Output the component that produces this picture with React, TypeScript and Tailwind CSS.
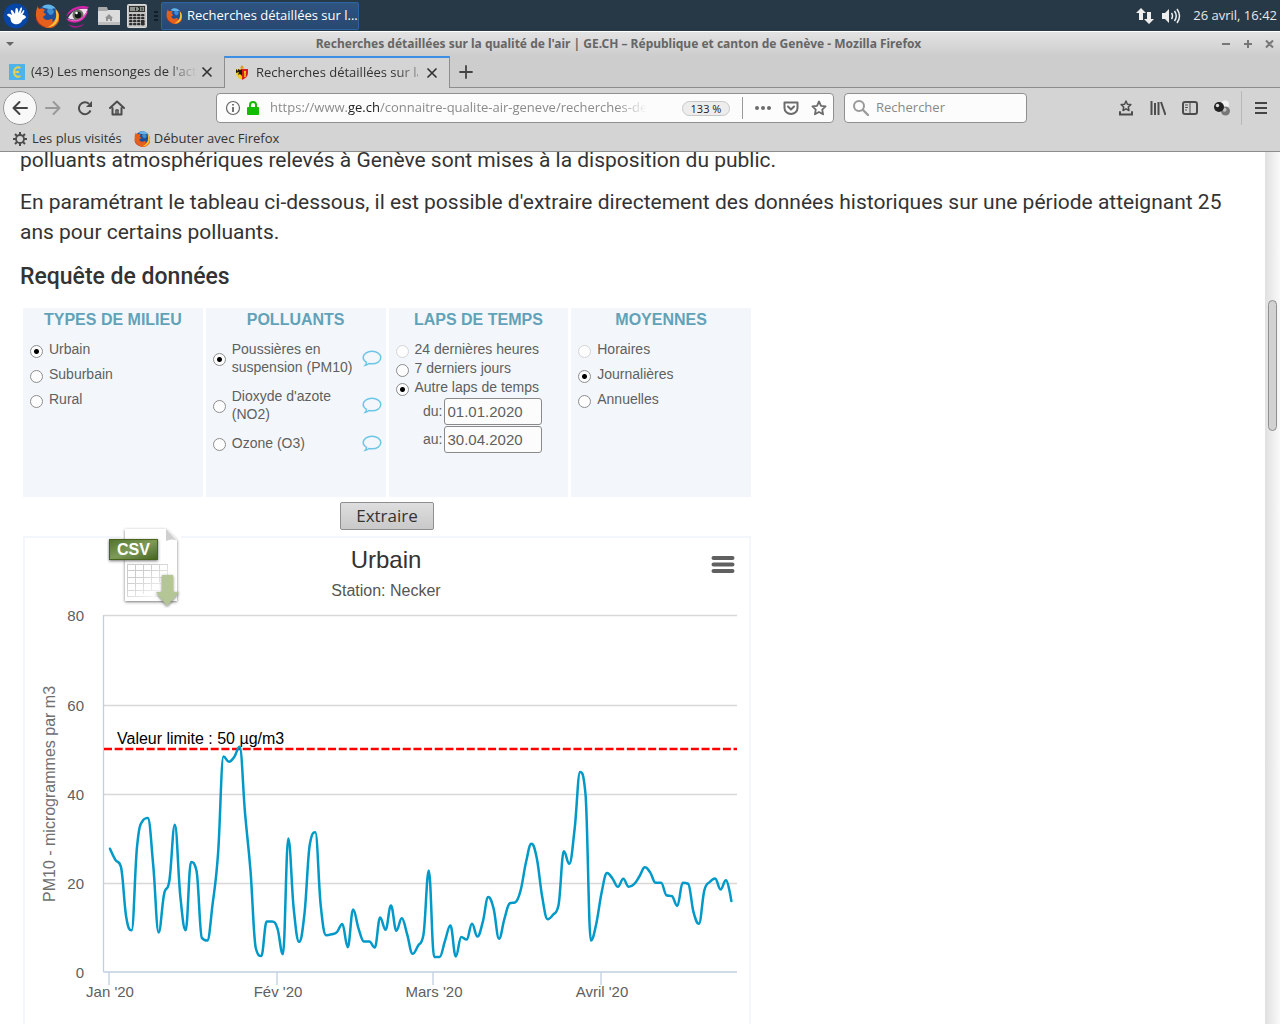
import type { ReactNode } from 'react';

const pm10 = [
  27.8, 25.3, 23.8, 12.4, 9.4, 28.2, 34, 34.7, 24.1, 8.9, 17.5, 20.7, 33.2, 17.3, 9.4, 24.8, 22.9, 7.7, 7.1, 15.4,
  26.7, 48.6, 47.4, 48.5, 50.8, 35.7, 22.9, 5.3, 3.6, 11.4, 11.4, 9.8, 4, 30.1, 14.3, 6.8, 13.2, 28.9, 31.5, 15,
  8.3, 8.5, 9, 10.8, 5.6, 14.1, 9.8, 6.9, 6.9, 5.5, 12.3, 9.5, 15, 9.3, 12.1, 8.5, 4.1, 5.9, 8.3, 22.9,
  3.4, 3.4, 7, 10.5, 3.5, 7.9, 7.3, 10.9, 8, 11.3, 16.9, 14.3, 7.5, 12, 15.5, 15.7, 18.4, 24.8, 28.9, 25.6,
  16.9, 11.9, 12.9, 15, 27.2, 24.4, 32.3, 45.1, 40.2, 7.1, 10.9, 18, 22.3, 21.1, 19.2, 21, 19.2, 19.8, 21.6, 23.6,
  22.4, 20.1, 20.1, 17.3, 17.1, 14.9, 20.1, 19.9, 13.5, 10.9, 18.4, 20.3, 21.1, 18.6, 20.7, 16,
];

const months = [
  { label: "Jan '20", x: 84 },
  { label: "Fév '20", x: 252 },
  { label: "Mars '20", x: 408 },
  { label: "Avril '20", x: 576 },
];

const gridLines = [
  { value: 80, y: 77 },
  { value: 60, y: 167 },
  { value: 40, y: 256 },
  { value: 20, y: 345 },
  { value: 0, y: 434 },
];

// Smoothed line: control points never overshoot the neighbouring values
function splinePath(values: number[]) {
  const pts = values.map((v, i) => ({ x: 85 + i * 5.403, y: 434 - v * 4.435 }));
  let d = `M ${pts[0].x} ${pts[0].y}`;
  let out = pts[0];
  for (let i = 1; i < pts.length; i++) {
    const prev = pts[i - 1];
    const p = pts[i];
    const next = pts[i + 1];
    let inn = p;
    let nextOut = p;
    if (next) {
      const lx = (1.5 * p.x + prev.x) / 2.5;
      let ly = (1.5 * p.y + prev.y) / 2.5;
      const rx = (1.5 * p.x + next.x) / 2.5;
      let ry = (1.5 * p.y + next.y) / 2.5;
      const c = ((ry - ly) * (rx - p.x)) / (rx - lx) + p.y - ry;
      ly += c;
      ry += c;
      if (ly > prev.y && ly > p.y) {
        ly = Math.max(prev.y, p.y);
        ry = 2 * p.y - ly;
      } else if (ly < prev.y && ly < p.y) {
        ly = Math.min(prev.y, p.y);
        ry = 2 * p.y - ly;
      }
      if (ry > next.y && ry > p.y) {
        ry = Math.max(next.y, p.y);
        ly = 2 * p.y - ry;
      } else if (ry < next.y && ry < p.y) {
        ry = Math.min(next.y, p.y);
        ly = 2 * p.y - ry;
      }
      inn = { x: lx, y: ly };
      nextOut = { x: rx, y: ry };
    }
    d += ` C ${out.x} ${out.y} ${inn.x} ${inn.y} ${p.x} ${p.y}`;
    out = nextOut;
  }
  return d;
}

const FirefoxIcon = ({ className }: { className?: string }) => (
  <svg viewBox="0 0 24 24" className={className} aria-hidden="true">
    <circle cx="12.5" cy="10.5" r="10" fill="#1d4f9a" />
    <path d="M7 3c4-4 11-3 14 2-3-1-4 0-5 1-3-2-6-1-9-3z" fill="#62b5e8" />
    <path d="M13 5c3-1 6 0 6 3-1 3-4 4-5 2-1-1-3-3-1-5z" fill="#3c8fd2" />
    <path
      d="M1 9C1 6 2 4 3 2c0 2 1 3 2 3 2-1 4 0 5 1-1 1-2 2-1 3l2 1c-1 2-3 2-3 3 1 3 5 4 8 2 2 0 2 1 1 3 3-1 5-4 5-8 0-2-1-4-1-5 3 3 4 7 3 12-2 5-7 8-12 7C5 22 0 17 1 9z"
      fill="#e4601c"
    />
    <path d="M20.500 5c3 3 4 7 2.500 11-2 5-6 7-10 7 6-3 9-8 8-14z" fill="#fcc237" />
    <path d="M1 12c1 6 5 10 11 11C5 23 0 18 1 12z" fill="#b93016" />
  </svg>
);

const EyeIcon = () => (
  <svg viewBox="0 0 26 24" className="h-6 w-[26px]" aria-hidden="true">
    <path d="M3 14C7 6 15 4 23 5c-3 9-11 13-20 9z" fill="#f4dcec" />
    <circle cx="13" cy="11" r="5.500" fill="#66715f" />
    <circle cx="13" cy="11" r="3.300" fill="#12181a" />
    <circle cx="11.500" cy="9" r="1.300" fill="#fff" />
    <path d="M1 13C4 4 14 0 24 3c-1 1-2 2-3 2C13 3 6 7 1 13z" fill="#d522aa" />
    <path d="M1 14c8 5 18 2 22-10 0 11-10 18-20 13z" fill="#d522aa" />
    <path d="M3 20c5 3 12 3 17-1-4 6-14 6-17 1z" fill="#b21791" />
    <path d="M3 15c8 4 15 1 19-7" fill="none" stroke="#f27bd3" strokeWidth=".8" />
  </svg>
);

const FolderIcon = () => (
  <svg viewBox="0 0 24 22" className="h-[22px] w-6" aria-hidden="true">
    <path d="M1 3q0-1 1-1h8l1 3h11q1 0 1 1v4H1z" fill="#a9a9a9" />
    <path d="M1 6h9l1-1h11q1 0 1 1v13q0 1-1 1H2q-1 0-1-1z" fill="#dcdcdc" />
    <path d="M1 17h22v2q0 1-1 1H2q-1 0-1-1z" fill="#bdbdbd" />
    <path d="M12 9l4 4h-1v3h-2v-2h-2v2H9v-3H8z" fill="#929292" />
  </svg>
);

const CalculatorIcon = () => (
  <svg viewBox="0 0 20 24" className="h-6 w-5" aria-hidden="true">
    <rect x=".5" y=".5" width="19" height="23" rx="1" fill="#c4c4c4" stroke="#d8d8d8" />
    <rect x="2" y="2" width="16" height="6" fill="#333" />
    <rect x="3" y="3" width="14" height="4" fill="#8c948c" />
    <path d="M8.500 3.500v3M11 3.500h1.500v3H11M15 3.500v3" stroke="#222" fill="none" />
    {[10, 13, 16, 19].map((y) =>
      [2, 6, 10, 14].map((x) => <rect key={`${x}-${y}`} x={x} y={y} width="3.500" height="2.300" rx="1" fill="#2d2d2d" />),
    )}
    <rect x="14" y="16" width="3.500" height="5.300" rx="1" fill="#2d2d2d" />
  </svg>
);

const GenevaCrest = () => (
  <svg viewBox="0 0 14 16" className="h-4 w-3.5" aria-hidden="true">
    <path d="M1 4h6v11C3 13 1 11 1 8z" fill="#f3cf16" />
    <path d="M7 4h6v4c0 3-2 5-6 7z" fill="#d81d1d" />
    <path d="M1 4l2 2V4l2 1 2-1v7l-2-2-2 1 1-3-3 1z" fill="#241a08" />
    <path d="M10 6v6M9 7h2" stroke="#f3cf16" strokeWidth="1.500" />
    <path d="M5 3l2-3 2 3-2 1z" fill="#d8a018" />
  </svg>
);

const CsvIcon = () => (
  <svg viewBox="0 0 74 82" className="h-[82px] w-[74px]" aria-hidden="true">
    <defs>
      <linearGradient id="csv-band" x1="0" x2="1" y1="0" y2="1">
        <stop offset="0" stopColor="#54742e" />
        <stop offset=".5" stopColor="#7d9a58" />
        <stop offset="1" stopColor="#486623" />
      </linearGradient>
      <filter id="csv-shadow" x="-20%" y="-20%" width="140%" height="140%">
        <feDropShadow dx="0" dy="1" stdDeviation="1.500" floodColor="#444" floodOpacity=".75" />
      </filter>
      <linearGradient id="csv-grid" x1="0" x2="1" y1="0" y2="1">
        <stop offset=".3" stopColor="#ccc" />
        <stop offset="1" stopColor="#fff" />
      </linearGradient>
    </defs>
    <rect x="14" y="0" width="60" height="76" fill="#fff" />
    <path d="M18 3h41l11 11v61H18z" fill="#fff" filter="url(#csv-shadow)" />
    <path d="M59 3l11 12c-3-2-7-2-11 0z" fill="#cfcfcf" />
    <g fill="none" stroke="url(#csv-grid)" strokeWidth="1">
      <rect x="20.500" y="38.500" width="40" height="32" />
      <path d="M20 44.500h41M20 51.500h38M20 57.500h34M20 64.500h32M28.500 38v32M36.500 38v30M44.500 38v26M52.500 38v18" />
    </g>
    <g filter="url(#csv-shadow)">
      <rect x="2" y="13" width="49" height="21" fill="#46641f" />
      <rect x="3" y="14" width="47" height="19" fill="url(#csv-band)" />
    </g>
    <text x="26.500" y="29" textAnchor="middle" fontSize="16" fontWeight="700" fill="#fff" fontFamily="Liberation Sans, sans-serif">
      CSV
    </text>
    <path d="M55 49h11v17h6L60 80 49 66h6z" fill="#b4c695" filter="url(#csv-shadow)" />
  </svg>
);

const Bubble = () => (
  <svg viewBox="0 0 20 17" className="h-[17px] w-5 shrink-0" fill="none" stroke="#6dc6e6" strokeWidth="1.500" aria-hidden="true">
    <path d="M4.500 12.300C2.500 11.300 1.200 9.600 1.200 7.600c0-3.500 3.900-6.300 8.800-6.300s8.800 2.800 8.800 6.300-3.900 6.200-8.800 6.200c-1 0-2-.1-3-.3-1.100.9-2.300 1.500-3.700 1.800.7-.8 1.100-1.900 1.200-3z" />
  </svg>
);

const ToolIcon = ({ children, className = '' }: { children: ReactNode; className?: string }) => (
  <svg viewBox="0 0 16 16" className={`size-4 ${className}`} fill="none" stroke="currentColor" strokeWidth="2" strokeLinecap="round" strokeLinejoin="round" aria-hidden="true">
    {children}
  </svg>
);

const IconButton = ({ label, children }: { label: string; children: ReactNode }) => (
  <button type="button" aria-label={label} className="flex size-8 items-center justify-center text-[#4c4c4c]">
    {children}
  </button>
);

const starPath = 'M8 1.500l2 4.300 4.600.6-3.400 3.200.9 4.700L8 12l-4.100 2.300.9-4.700L1.400 6.400 6 5.800z';

const CloseIcon = () => (
  <ToolIcon>
    <path d="M4 4l8 8M12 4l-8 8" strokeWidth="1.700" />
  </ToolIcon>
);

function Taskbar() {
  return (
    <header className="flex h-[31px] shrink-0 items-center bg-[#273947] pl-[3px] text-[#e8e8e8]">
      <div className="flex items-center gap-[6px]">
        <svg viewBox="0 0 26 26" className="size-[26px]" aria-hidden="true">
          <circle cx="13" cy="13" r="12.500" fill="#0646a8" />
          <path
            d="M4 12c1-2 3-1 5 0L8 9c-1-2 1-3 2-1l2 3 .5-5c.5-2 2.500-1 2.500 1l.5 3 2-5c1-1 2 0 1.500 1l-1.500 5 3-4c1 0 1 1 .5 2l-1.500 3c3 0 4 2 3 3-1 1-2 1-3 2-2 4-5 5-8 4-4-1-4-5-4-6-1-1-3-2-3.500-3z"
            fill="#fff"
          />
        </svg>
        <FirefoxIcon className="size-6" />
        <EyeIcon />
        <FolderIcon />
        <CalculatorIcon />
      </div>
      <div className="mr-[3px] ml-[7px] flex flex-col gap-[2px]">
        <i className="h-[2px] w-1 bg-[#131f28]" />
        <i className="h-[2px] w-1 bg-[#131f28]" />
        <i className="h-[2px] w-1 bg-[#131f28]" />
      </div>
      <button type="button" className="flex h-7 w-[198px] items-center gap-[5px] rounded-xs border border-[#2b64a3] bg-linear-to-b from-[#2f5480] to-[#27476f] px-1 text-[13px] whitespace-nowrap text-white">
        <FirefoxIcon className="size-4 shrink-0" />
        Recherches détaillées sur l...
      </button>
      <div className="ml-auto flex items-center pr-[3px]">
        <svg viewBox="0 0 18 18" className="mr-[7px] size-[18px]" fill="#eee" aria-hidden="true">
          <path d="M5 1l5 5H7v7H3V6H0zM13 17l-5-5h3V5h4v7h3z" />
        </svg>
        <svg viewBox="0 0 20 18" className="mr-3 h-[18px] w-5" fill="#eee" aria-hidden="true">
          <path d="M1 6h3l4-4v14l-4-4H1z" />
          <path d="M10.500 6q2 3 0 6M13.500 4q3.500 5 0 10M16 2q5 7 0 14" fill="none" stroke="#eee" strokeWidth="1.500" />
        </svg>
        <span className="text-[13px]">26 avril, 16:42</span>
      </div>
    </header>
  );
}

function TabStrip() {
  return (
    <div className="flex h-8 shrink-0 bg-[#cdcdcd] text-[13px] text-[#333]">
      <div className="flex w-56 items-center border-b border-[#8d8d8d] pl-[9px]">
        <svg viewBox="0 0 16 16" className="size-4 shrink-0" aria-hidden="true">
          <rect width="16" height="16" fill="#4fb2e8" />
          <path d="M11.500 4C8 2 5 4.500 5 8s3 6 6.500 4M4 8h6" fill="none" stroke="#e3cf50" strokeWidth="2" />
        </svg>
        <span className="ml-[6px] w-[166px] whitespace-nowrap [mask-image:linear-gradient(to_right,#000_82%,transparent)]">
          (43) Les mensonges de l'acti
        </span>
        <button type="button" aria-label="Fermer l'onglet" className="ml-[2px]">
          <CloseIcon />
        </button>
      </div>
      <div className="flex w-[226px] items-center border-x border-t-2 border-x-[#8d8d8d] border-t-[#3c8fe4] bg-[#d4d4d4] pl-[10px]">
        <GenevaCrest />
        <span className="ml-[7px] w-[162px] whitespace-nowrap [mask-image:linear-gradient(to_right,#000_86%,transparent_110%)]">
          Recherches détaillées sur la
        </span>
        <button type="button" aria-label="Fermer l'onglet" className="ml-[6px]">
          <CloseIcon />
        </button>
      </div>
      <div className="flex flex-1 items-center border-b border-[#8d8d8d] pl-2">
        <button type="button" aria-label="Nouvel onglet" className="text-[#444]">
          <ToolIcon>
            <path d="M8 2v12M2 8h12" strokeWidth="1.800" />
          </ToolIcon>
        </button>
      </div>
    </div>
  );
}

function NavBar() {
  return (
    <nav className="flex h-10 shrink-0 items-center bg-[#d4d4d4] pl-[3px] text-[13px]">
      <button type="button" aria-label="Reculer" className="flex size-[34px] items-center justify-center rounded-full border border-[#999] bg-[#f8f8f8] text-[#444]">
        <ToolIcon>
          <path d="M15 8H1.500M7.500 2l-6 6 6 6" />
        </ToolIcon>
      </button>
      <div className="flex">
        <button type="button" aria-label="Avancer" className="flex size-8 items-center justify-center text-[#999]">
          <ToolIcon>
            <path d="M1 8h13.500M8.500 2l6 6-6 6" />
          </ToolIcon>
        </button>
        <IconButton label="Actualiser">
          <ToolIcon>
            <path d="M13.500 10.500A6 6 0 1 1 12 3.800" strokeLinecap="butt" />
            <path d="M15 1v6H9z" fill="currentColor" stroke="none" />
          </ToolIcon>
        </IconButton>
        <IconButton label="Accueil">
          <ToolIcon>
            <path d="M1 8l7-6.500L15 8M3.500 8v6.500h9V8" />
            <path d="M7 14v-4h2v4" strokeWidth="1.500" />
          </ToolIcon>
        </IconButton>
      </div>
      <div className="ml-[83px] flex h-[30px] flex-1 items-center rounded-[4px] border border-[#8f8f8f] bg-[#fcfcfc] px-2">
        <svg viewBox="0 0 16 16" className="size-4 shrink-0" fill="none" stroke="#666" aria-hidden="true">
          <circle cx="8" cy="8" r="6.500" strokeWidth="1.200" />
          <path d="M8 7v5M8 4v1.500" strokeWidth="1.800" />
        </svg>
        <svg viewBox="0 0 14 16" className="ml-[5px] h-4 w-3.5 shrink-0" aria-hidden="true">
          <path d="M4 8V5a3 3 0 0 1 6 0v3" fill="none" stroke="#12bc00" strokeWidth="2" />
          <rect x="1" y="7" width="12" height="8" rx="1" fill="#12bc00" />
        </svg>
        <span className="ml-[10px] w-0 flex-1 whitespace-nowrap text-[#8b8b8b] [mask-image:linear-gradient(to_right,#000_92%,transparent)]">
          https://www.<span className="text-[#222]">ge.ch</span>/connaitre-qualite-air-geneve/recherches-det
        </span>
        <button type="button" className="ml-[35px] h-[15px] w-12 rounded-full border border-[#c8c8c8] bg-[#ededed] text-[11px] leading-[13px] text-[#222]">
          133 %
        </button>
        <span className="ml-3 h-[22px] w-px bg-[#999]" />
        <button type="button" aria-label="Actions" className="ml-3 text-[#6b6b6b]">
          <ToolIcon>
            <path d="M2 8h.01M8 8h.01M14 8h.01" strokeWidth="4" />
          </ToolIcon>
        </button>
        <button type="button" aria-label="Pocket" className="ml-3 text-[#6b6b6b]">
          <ToolIcon>
            <path d="M1.500 2.500h13V8a6.500 6 0 0 1-13 0z" />
            <path d="M5 6.500l3 3 3-3" />
          </ToolIcon>
        </button>
        <button type="button" aria-label="Marquer cette page" className="ml-3 -mr-2 pr-1.5 text-[#6b6b6b]">
          <ToolIcon>
            <path d={starPath} strokeWidth="1.800" />
          </ToolIcon>
        </button>
      </div>
      <div className="ml-[10px] flex h-[30px] w-[183px] items-center rounded-[4px] border border-[#8f8f8f] bg-[#fcfcfc] pl-2 text-[#999]">
        <ToolIcon className="shrink-0">
          <circle cx="6" cy="6" r="5" />
          <path d="M10 10l5 5" strokeWidth="2.300" />
        </ToolIcon>
        <input aria-label="Rechercher" placeholder="Rechercher" className="ml-[7px] w-full bg-transparent text-[#222] outline-none placeholder:text-[#888]" />
      </div>
      <div className="ml-[83px] flex">
        <IconButton label="Marque-pages">
          <ToolIcon>
            <path d="M8 1l1.400 3.200 3.400.4-2.500 2.400.7 3.500L8 8.800 5 10.500 5.700 7 3.200 4.600l3.400-.4z" strokeWidth="1.500" />
            <path d="M2 12v2.500h12V12" strokeLinejoin="miter" />
          </ToolIcon>
        </IconButton>
        <IconButton label="Bibliothèque">
          <ToolIcon>
            <path d="M1.500 1v14M5 3v12M8.500 2v13M11 2l4.500 13" strokeLinecap="butt" />
          </ToolIcon>
        </IconButton>
        <IconButton label="Panneau latéral">
          <ToolIcon>
            <rect x="1" y="2" width="14" height="12" rx="2" />
            <path d="M8 2v12M3.500 5h2M3.500 7.500h2M3.500 10h1" strokeWidth="1" />
          </ToolIcon>
        </IconButton>
        <IconButton label="Extension">
          <svg viewBox="0 0 16 16" className="size-4" aria-hidden="true">
            <circle cx="11" cy="4.500" r="4" fill="#f2f2f2" />
            <circle cx="11.500" cy="11" r="4.500" fill="#777" />
            <circle cx="10.500" cy="9.800" r="2" fill="#c5c5c5" />
            <circle cx="5" cy="7" r="5" fill="#222" />
            <circle cx="3.500" cy="5.500" r="1.700" fill="#ddd" />
          </svg>
        </IconButton>
      </div>
      <span className="ml-[3px] h-[34px] w-px bg-[#b8b8b8]" />
      <button type="button" aria-label="Ouvrir le menu" className="mr-[11px] ml-[11px] text-[#444]">
        <ToolIcon>
          <path d="M2 3h12M2 8h12M2 13h12" strokeLinecap="butt" />
        </ToolIcon>
      </button>
    </nav>
  );
}

function Radio({ name, label, checked, disabled, className = '' }: { name: string; label: string; checked?: boolean; disabled?: boolean; className?: string }) {
  return (
    <label className={`flex items-center gap-[6px] ${className}`}>
      <input
        type="radio"
        name={name}
        defaultChecked={checked}
        disabled={disabled}
        className="mt-[3px] size-[13px] shrink-0 appearance-none rounded-full border border-[#8c8c8c] bg-[#fdfdfd] checked:bg-[radial-gradient(circle,#000_0_2px,#fdfdfd_3px)] disabled:border-[#d4d4d4]"
      />
      {label}
    </label>
  );
}

const Panel = ({ title, children }: { title: string; children: ReactNode }) => (
  <fieldset className="h-[189px] min-w-0 bg-[#f3f7fb]">
    <legend className="float-left mb-[8px] w-full text-center text-[16px] leading-[23px] font-bold text-[#62a2b9]">{title}</legend>
    <div className="clear-both">{children}</div>
  </fieldset>
);

function DateField({ label, value }: { label: string; value: string }) {
  return (
    <label className="flex items-center justify-end gap-px">
      {label}
      <input defaultValue={value} className="h-[27px] w-[98px] rounded-[3px] border border-[#8a8a8a] bg-[#fcfcfc] px-[3px] text-[15px]" />
    </label>
  );
}

function QueryForm() {
  return (
    <form className="font-['Liberation_Sans',Arial,sans-serif] text-[14px] text-[#5f5f5f]" onSubmit={(e) => e.preventDefault()}>
      <div className="grid grid-cols-4 gap-[3px]">
        <Panel title="TYPES DE MILIEU">
          <div className="flex flex-col gap-[6px] pt-px pl-[7px] leading-[19px]">
            <Radio name="milieu" label="Urbain" checked />
            <Radio name="milieu" label="Suburbain" />
            <Radio name="milieu" label="Rural" />
          </div>
        </Panel>
        <Panel title="POLLUANTS">
          <div className="flex flex-col gap-[11px] pt-px pr-1 pl-[7px] leading-[18px]">
            {['Poussières en suspension (PM10)', "Dioxyde d'azote (NO2)", 'Ozone (O3)'].map((label, i) => (
              <div key={label} className="flex items-center justify-between">
                <Radio name="polluant" label={label} checked={i === 0} className="w-[147px]" />
                <button type="button" aria-label="Info">
                  <Bubble />
                </button>
              </div>
            ))}
          </div>
        </Panel>
        <Panel title="LAPS DE TEMPS">
          <div className="flex flex-col pt-px pl-[7px] leading-[19px]">
            <Radio name="laps" label="24 dernières heures" disabled />
            <Radio name="laps" label="7 derniers jours" />
            <Radio name="laps" label="Autre laps de temps" checked />
            <div className="mt-px flex w-[146px] flex-col gap-px">
              <DateField label="du:" value="01.01.2020" />
              <DateField label="au:" value="30.04.2020" />
            </div>
          </div>
        </Panel>
        <Panel title="MOYENNES">
          <div className="flex flex-col gap-[6px] pt-px pl-[7px] leading-[19px]">
            <Radio name="moyenne" label="Horaires" disabled />
            <Radio name="moyenne" label="Journalières" checked />
            <Radio name="moyenne" label="Annuelles" />
          </div>
        </Panel>
      </div>
      <button
        type="submit"
        className="mx-auto mt-[5px] block h-7 rounded-xs border border-[#8f8f8f] bg-linear-to-b from-[#dedede] to-[#c9c9c9] px-[15px] font-['Open_Sans',sans-serif] text-[17px] leading-[26px] text-[#333]"
      >
        Extraire
      </button>
    </form>
  );
}

function Chart() {
  return (
    <section className="relative mt-[6px] border-2 border-[#f3f7fb] bg-white">
      <svg viewBox="0 0 724 500" className="block w-full font-['Liberation_Sans',Arial,sans-serif]" fontSize="15" fill="#606060">
        <text x="361" y="30" textAnchor="middle" fontSize="24" fill="#333">Urbain</text>
        <text x="361" y="58" textAnchor="middle" fontSize="16" fill="#555">Station: Necker</text>
        {gridLines.map((g) => (
          <g key={g.value}>
            {g.value > 0 && <path d={`M79 ${g.y + 0.5}H712`} stroke="#d8d8d8" strokeWidth="1.300" />}
            <text x="59" y={g.y + 6} textAnchor="end">{g.value}</text>
          </g>
        ))}
        <path d="M78.500 77V434M78.500 434H712" fill="none" stroke="#c0d0e0" strokeWidth="1.300" />
        {months.map((m) => (
          <g key={m.label}>
            <path d={`M${m.x} 434v13`} stroke="#c0d0e0" strokeWidth="1.300" />
            <text x={m.x + 1} y="459" textAnchor="middle">{m.label}</text>
          </g>
        ))}
        <text transform="translate(30 256) rotate(-90)" textAnchor="middle" fontSize="16" fill="#707070">PM10 - microgrammes par m3</text>
        <path d="M79 211H712" stroke="#f00" strokeWidth="2.700" strokeDasharray="8 2.670" />
        <text x="92" y="206" fontSize="16" fill="#000">Valeur limite : 50 µg/m3</text>
        <path d={splinePath(pm10)} fill="none" stroke="#0099c8" strokeWidth="2.500" strokeLinejoin="round" strokeLinecap="round" />
      </svg>
      <a href="#csv" aria-label="Télécharger en CSV" className="absolute -top-3 left-[82px]">
        <CsvIcon />
      </a>
      <button type="button" aria-label="Menu du graphique" className="absolute top-[17px] right-[14px]">
        <svg viewBox="0 0 24 20" className="h-5 w-6" stroke="#606060" strokeWidth="4" strokeLinecap="round" aria-hidden="true">
          <path d="M2.500 3h19M2.500 9.500h19M2.500 16h19" />
        </svg>
      </button>
    </section>
  );
}

export default function App() {
  return (
    <div className="flex h-screen flex-col overflow-hidden bg-white font-['Open_Sans',sans-serif]">
      <Taskbar />
      <div className="flex h-[25px] shrink-0 items-center border-t border-white bg-linear-to-b from-[#e3e3e3] to-[#cdcdcd] text-[#666]">
        <svg viewBox="0 0 20 10" className="h-2.5 w-5" fill="#666" aria-hidden="true">
          <path d="M6 3h8l-4 4z" />
        </svg>
        <h1 className="flex-1 text-center font-['Noto_Sans',sans-serif] text-[12px] font-bold">
          Recherches détaillées sur la qualité de l'air | GE.CH – République et canton de Genève - Mozilla Firefox
        </h1>
        <svg viewBox="0 0 63 10" className="h-2.5 w-[63px]" fill="none" stroke="#777" strokeWidth="2" aria-hidden="true">
          <path d="M5 5h8M27 5h8M31 1v8M49 1.500l7 7M56 1.500l-7 7" />
        </svg>
      </div>
      <TabStrip />
      <NavBar />
      <div className="flex h-6 shrink-0 items-center border-b border-[#8d8d8d] bg-[#d4d4d4] pb-px pl-3 text-[13px] text-[#333]">
        <button type="button" className="flex items-center gap-1">
          <svg viewBox="0 0 16 16" className="size-4" fill="none" stroke="#4c4c4c" aria-hidden="true">
            <circle cx="8" cy="8" r="4" strokeWidth="1.800" />
            <path d="M8 1v3M8 12v3M1 8h3M12 8h3M3 3l2 2M11 11l2 2M13 3l-2 2M5 11l-2 2" strokeWidth="2" />
          </svg>
          Les plus visités
        </button>
        <button type="button" className="ml-3 flex items-center gap-1">
          <FirefoxIcon className="size-4" />
          Débuter avec Firefox
        </button>
      </div>
      <div className="flex min-h-0 flex-1">
        <main className="min-w-0 flex-1 overflow-hidden px-5 font-['Roboto',sans-serif] text-[21px] leading-[30px] text-[#333]">
          <p className="-mt-[7px]">polluants atmosphériques relevés à Genève sont mises à la disposition du public.</p>
          <p className="mt-3">
            En paramétrant le tableau ci-dessous, il est possible d'extraire directement des données historiques sur une
            période atteignant 25 ans pour certains polluants.
          </p>
          <h2 className="mt-[15px] text-[23px] font-medium">Requête de données</h2>
          <div className="mt-4 ml-[3px] max-w-[728px]">
            <QueryForm />
            <Chart />
          </div>
        </main>
        <div className="w-[15px] bg-linear-to-r from-[#e0e0e0] to-[#fafafa] pt-[148px] pl-[3px]">
          <div className="h-[131px] w-[9px] rounded-full border border-[#8f8f8f] bg-[#d2d2d2]" />
        </div>
      </div>
    </div>
  );
}
